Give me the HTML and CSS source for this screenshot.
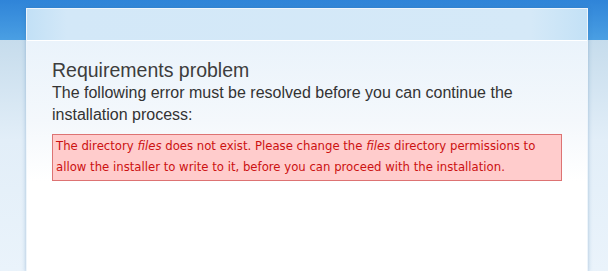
FILE: index.html
```html
<!DOCTYPE html>
<html lang="en">
<head>
    <meta charset="UTF-8">
    <title>Requirements problem</title>
    <link rel="stylesheet" href="styles.css">
</head>
<body>
    <div class="page">
        <div class="card">
            <div class="card-head"></div>
            <div class="card-body">
                <h1 class="title">Requirements problem</h1>
                <p class="lead">The following error must be resolved before you can continue the installation process:</p>
                <div class="error">
                    The directory <em>files</em> does not exist. Please change the <em>files</em> directory permissions to allow the installer to write to it, before you can proceed with the installation.
                </div>
            </div>
        </div>
    </div>
</body>
</html>
```

FILE: styles.css
```css
html, body {
    margin: 0;
    padding: 0;
    height: 100%;
}
body {
    background:
        linear-gradient(180deg, #2f84d8 0, #4a9fe3 40px, transparent 40px),
        linear-gradient(180deg, #c6dcec 40px, #e2eef8 140px, #eaf3fb 100%);
    font-family: "Liberation Sans", Arial, sans-serif;
    color: #3a3a3a;
}
.page {
    padding: 8px 20px 0 26px;
    height: calc(100% - 8px);
}
.card {
    height: 100%;
    background: #fff;
    border: 1px solid #eef5fb;
    border-bottom: none;
    box-shadow: 0 0 4px rgba(40, 100, 160, 0.35);
}
.card-head {
    height: 31px;
    background: linear-gradient(90deg, #c2e0f6 0, #d3e8f8 40px, #d5e9f8 90%, #c3e1f6 100%);
    border-bottom: 1px solid #fff;
}
.card-body {
    padding: 18px 25px 0 25px;
    background: linear-gradient(180deg, #eaf3fb 0, #f4f8fc 80px, #fff 140px);
    height: calc(100% - 32px);
    box-sizing: border-box;
}
.title {
    margin: 0 0 1px 0;
    font-size: 19.5px;
    font-weight: normal;
    line-height: 22px;
    color: #3d3d3d;
}
.lead {
    margin: 0 0 8px 0;
    font-size: 16px;
    line-height: 22px;
    color: #333;
}
.error {
    background: #ffcccc;
    border: 1px solid #dd7373;
    color: #cc1111;
    font-family: "DejaVu Sans", Verdana, sans-serif;
    font-size: 11.7px;
    line-height: 21px;
    padding: 1px 3px 2px 3px;
}
```
